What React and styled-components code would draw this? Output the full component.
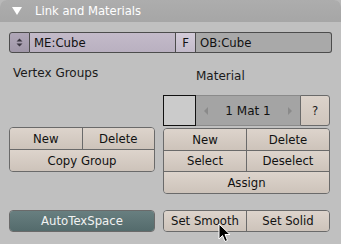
import React from "react";
import styled, { createGlobalStyle } from "styled-components";

const Global = createGlobalStyle`
  html, body { margin: 0; padding: 0; background: #b9b9b9; }
  body { font-family: "DejaVu Sans", "Liberation Sans", sans-serif; }
`;

const Panel = styled.div`
  position: relative;
  width: 341px;
  height: 244px;
  background: #c0c0c0;
  border-radius: 7px 7px 0 0;
  overflow: hidden;
  font-size: 11.7px;
  color: #1a1a1a;
`;

const Header = styled.div`
  height: 22px;
  background: linear-gradient(#adadad, #a6a6a6);
  display: flex;
  align-items: center;
  padding-left: 12px;
  gap: 13px;
  color: #fff;
  font-size: 11.6px;
`;

const Body = styled.div`
  padding: 10px 9px 0 9px;
`;

const TopRow = styled.div`
  display: flex;
  height: 21px;
  width: 323px;
`;

const Field = styled.div`
  box-sizing: border-box;
  height: 100%;
  width: ${(p) => p.$w}px;
  background: ${(p) => p.$bg};
  border: 1px solid #4c4c4c;
  border-left-width: ${(p) => (p.$first ? 1 : 0)}px;
  border-radius: ${(p) => p.$radius || "0"};
  display: flex;
  align-items: center;
  justify-content: ${(p) => (p.$center ? "center" : "flex-start")};
  padding-left: ${(p) => (p.$center ? 0 : 4)}px;
  color: #111;
`;

const Columns = styled.div`
  display: grid;
  grid-template-columns: 146px 167px;
  column-gap: 8px;
  margin-top: 12px;
`;

const Column = styled.div`
  display: flex;
  flex-direction: column;
`;

const Label = styled.div`
  height: 13px;
  line-height: 13px;
  font-size: 12px;
  padding-left: ${(p) => p.$indent}px;
  margin-top: ${(p) => p.$top}px;
`;

const MatRow = styled.div`
  display: flex;
  height: 31px;
  margin-top: 12px;
`;

const Swatch = styled.div`
  box-sizing: border-box;
  width: 33px;
  background: #cbcbcb;
  border: 1px solid #111;
`;

const Browse = styled.div`
  box-sizing: border-box;
  flex: 1;
  background: #a4a4a4;
  border-top: 1px solid #8a8a8a;
  border-bottom: 1px solid #8a8a8a;
  display: flex;
  align-items: center;
  justify-content: space-between;
  padding: 0 8px;
  color: #111;
  font-size: 12px;
`;

const Tri = styled.span`
  width: 0;
  height: 0;
  border-top: 4px solid transparent;
  border-bottom: 4px solid transparent;
  ${(p) => (p.$dir === "left" ? "border-right: 4px solid #8a8a8a;" : "border-left: 4px solid #8a8a8a;")}
`;

const Help = styled.div`
  box-sizing: border-box;
  width: 30px;
  background: linear-gradient(#dcd3cb, #cfc5bc);
  border: 1px solid #6a6a6a;
  border-radius: 0 3px 3px 0;
  display: flex;
  align-items: center;
  justify-content: center;
`;

const Stack = styled.div`
  display: flex;
  flex-direction: column;
  margin-top: ${(p) => p.$top}px;
  border: 1px solid #6a6a6a;
  border-radius: 4px;
  overflow: hidden;
`;

const BtnRow = styled.div`
  display: flex;
  height: ${(p) => p.$h}px;
  & + & { border-top: 1px solid #6a6a6a; }
`;

const Btn = styled.div`
  flex: 1;
  display: flex;
  align-items: center;
  justify-content: center;
  background: ${(p) => (p.$dark ? "linear-gradient(#687f80, #546b6c)" : "linear-gradient(#ddd4cc, #cdc3ba)")};
  color: ${(p) => (p.$dark ? "#f2f2f2" : "#111")};
  & + & { border-left: 1px solid #6a6a6a; }
`;

const Bottom = styled.div`
  display: grid;
  grid-template-columns: 146px 167px;
  column-gap: 8px;
  margin-top: 16px;
`;

const Cursor = styled.svg`
  position: absolute;
  left: 218px;
  top: 223px;
`;

export default function App() {
  return (
    <>
      <Global />
      <Panel>
        <Header>
          <svg width="10" height="8" viewBox="0 0 10 8">
            <path d="M0 0 L10 0 L5 8 Z" fill="#fff" />
          </svg>
          <span>Link and Materials</span>
        </Header>
        <Body>
          <TopRow>
            <Field $w={21} $bg="linear-gradient(#b0a7b8, #a097a8)" $first $center $radius="3px 0 0 3px">
              <svg width="7" height="9" viewBox="0 0 7 9">
                <path d="M0.5 3.5 L3.5 0.5 L6.5 3.5 Z M0.5 5.5 L3.5 8.5 L6.5 5.5 Z" fill="#3a3540" />
              </svg>
            </Field>
            <Field $w={146} $bg="linear-gradient(#c3bac9, #b9b0c0)">ME:Cube</Field>
            <Field $w={20} $bg="linear-gradient(#d3cbd9, #c3bbca)" $center>F</Field>
            <Field $w={136} $bg="#a9a9a9" $radius="0 3px 3px 0">OB:Cube</Field>
          </TopRow>
          <Columns>
            <Column>
              <Label $indent={4} $top={2}>Vertex Groups</Label>
              <Stack $top={47}>
                <BtnRow $h={21}>
                  <Btn>New</Btn>
                  <Btn>Delete</Btn>
                </BtnRow>
                <BtnRow $h={21}>
                  <Btn>Copy Group</Btn>
                </BtnRow>
              </Stack>
            </Column>
            <Column>
              <Label $indent={33} $top={5}>Material</Label>
              <MatRow>
                <Swatch />
                <Browse>
                  <Tri $dir="left" />
                  <span>1 Mat 1</span>
                  <Tri $dir="right" />
                </Browse>
                <Help>?</Help>
              </MatRow>
              <Stack $top={2}>
                <BtnRow $h={21}>
                  <Btn>New</Btn>
                  <Btn>Delete</Btn>
                </BtnRow>
                <BtnRow $h={20}>
                  <Btn>Select</Btn>
                  <Btn>Deselect</Btn>
                </BtnRow>
                <BtnRow $h={21}>
                  <Btn>Assign</Btn>
                </BtnRow>
              </Stack>
            </Column>
          </Columns>
          <Bottom>
            <Stack $top={0}>
              <BtnRow $h={20}>
                <Btn $dark>AutoTexSpace</Btn>
              </BtnRow>
            </Stack>
            <Stack $top={0}>
              <BtnRow $h={20}>
                <Btn>Set Smooth</Btn>
                <Btn>Set Solid</Btn>
              </BtnRow>
            </Stack>
          </Bottom>
        </Body>
        <Cursor width="13" height="20" viewBox="0 0 13 20">
          <path d="M1 1 L1 16 L4.5 12.5 L7 18.5 L9.5 17.5 L7 11.5 L12 11.5 Z" fill="#000" stroke="#fff" strokeWidth="1" strokeLinejoin="round" />
        </Cursor>
      </Panel>
    </>
  );
}
